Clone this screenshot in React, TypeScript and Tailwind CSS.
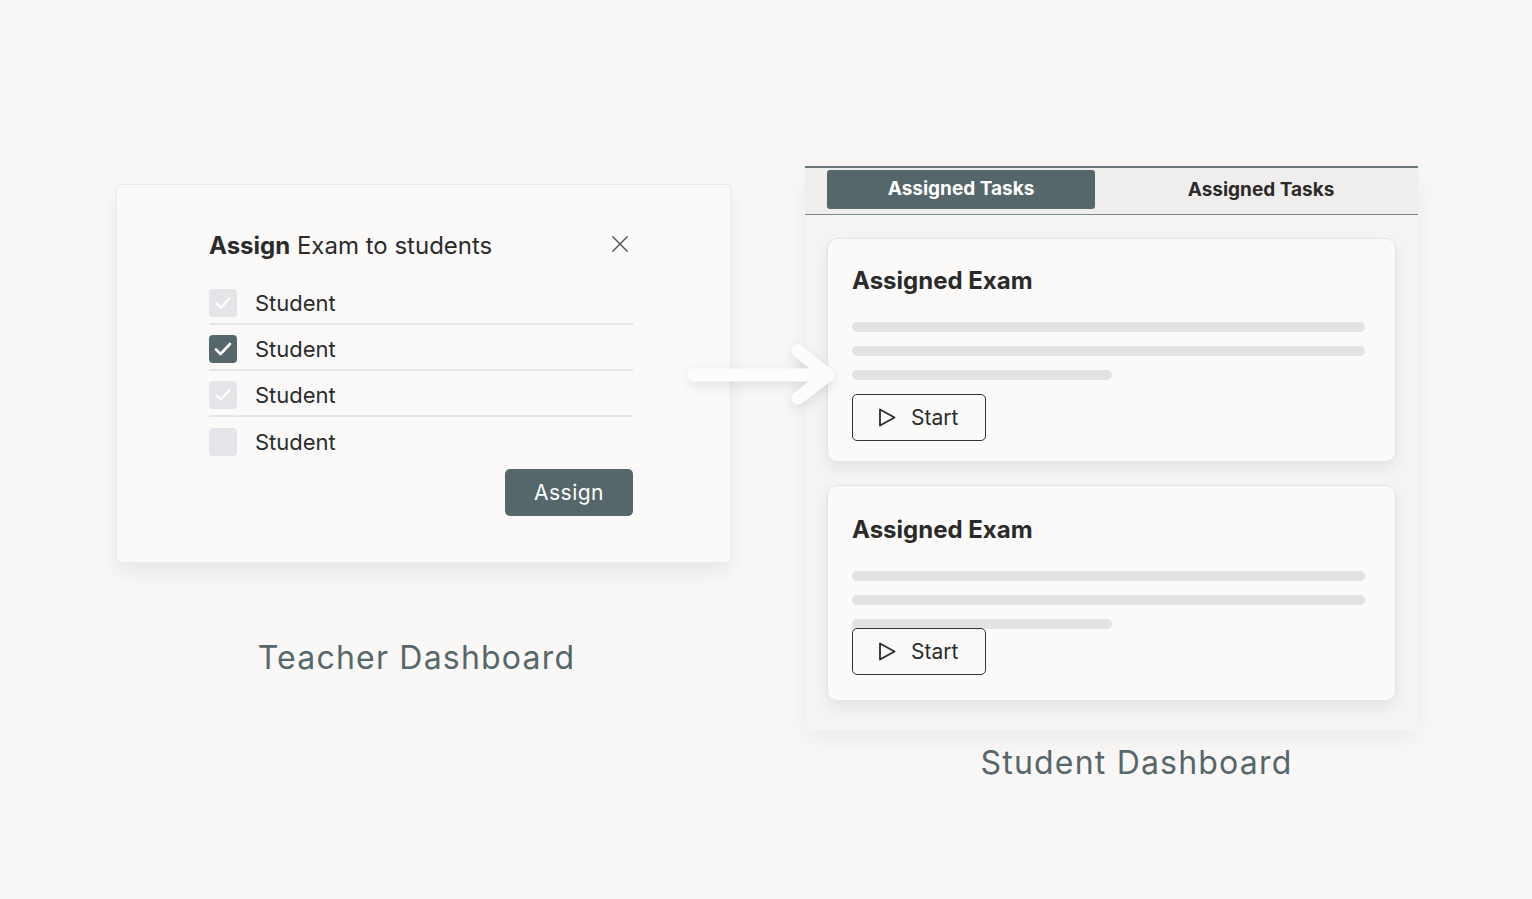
import React from 'react';

const font = { fontFamily: 'Inter, "Noto Sans", sans-serif' };

function CheckIcon({ className }: { className?: string }) {
  return (
    <svg viewBox="0 0 24 24" className={className} fill="none" stroke="currentColor" strokeWidth={2.6} strokeLinecap="round" strokeLinejoin="round">
      <path d="M5 12.5l4.5 4.5L19 7" />
    </svg>
  );
}

function StudentRow({ state, last }: { state: 'faded' | 'checked' | 'empty'; last?: boolean }) {
  return (
    <div className={`flex h-[46px] items-center gap-[18px] pt-[4px] ${last ? '' : 'border-b-2 border-[#e6e5e8]'}`}>
      <div
        className={`flex h-[28px] w-[28px] items-center justify-center rounded-[4px] ${
          state === 'checked' ? 'bg-[#56676b] text-white' : 'bg-[#e5e4e8] text-white'
        }`}
      >
        {state !== 'empty' && <CheckIcon className={state === 'checked' ? 'h-[24px] w-[24px]' : 'h-[22px] w-[22px]'} />}
      </div>
      <span className="text-[22px] text-[#2b2b2b]">Student</span>
    </div>
  );
}

function ExamCard({ titleTop, buttonGap, bottom }: { titleTop: string; buttonGap: string; bottom: string }) {
  return (
    <div className={`rounded-[10px] border border-[#e4e3e3] bg-[#fbfaf9] pl-[24px] pr-[30px] shadow-[0_6px_14px_rgba(0,0,0,0.07)] ${titleTop} ${bottom}`}>
      <h3 className="text-[24px] font-bold leading-[32px] text-[#2a2a2a]">Assigned Exam</h3>
      <div className="mt-[25px] flex flex-col gap-[14px]">
        <div className="h-[10px] w-full rounded-full bg-[#e3e2e5]" />
        <div className="h-[10px] w-full rounded-full bg-[#e3e2e5]" />
        <div className="h-[10px] w-[260px] rounded-full bg-[#e3e2e5]" />
      </div>
      <button className={`relative flex h-[47px] w-[134px] items-center gap-[14px] rounded-[5px] border-[1.5px] border-[#333] bg-[#fbfaf9] pl-[24px] ${buttonGap}`}>
        <svg viewBox="0 0 20 20" className="h-[21px] w-[20px]" fill="none" stroke="#2b2b2b" strokeWidth={1.8} strokeLinejoin="round">
          <path d="M3 2 L17.5 10 L3 18 Z" />
        </svg>
        <span className="text-[21px] text-[#2b2b2b]">Start</span>
      </button>
    </div>
  );
}

export default function App() {
  return (
    <div className="relative h-[899px] w-full overflow-hidden bg-[#faf8f6]" style={font}>
      <div className="flex items-start gap-[74px] pl-[116px] pt-[166px]">
        {/* Teacher side */}
        <div className="mt-[18px] flex w-[615px] flex-col items-center">
          <div className="h-[379px] w-[615px] rounded-[4px] border border-[#ebe9e7] bg-[#fbfaf9] pl-[92px] pr-[97px] pt-[45px] shadow-[0_10px_22px_rgba(0,0,0,0.07)]">
            <div className="flex items-center justify-between">
              <h2 className="text-[24px] leading-[32px] text-[#2b2b2b]">
                <span className="font-bold">Assign</span> Exam to students
              </h2>
              <svg viewBox="0 0 20 20" className="mr-[4px] mt-[-4px] h-[18px] w-[18px]" fill="none" stroke="#555" strokeWidth={1.6} strokeLinecap="round">
                <path d="M2 2L18 18M18 2L2 18" />
              </svg>
            </div>
            <div className="mt-[17px] flex flex-col">
              <StudentRow state="faded" />
              <StudentRow state="checked" />
              <StudentRow state="faded" />
              <StudentRow state="empty" last />
            </div>
            <div className="mt-[6px] flex justify-end">
              <button className="h-[47px] w-[128px] rounded-[5px] bg-[#56676b] text-[21px] tracking-[0.5px] text-white">Assign</button>
            </div>
          </div>
          <div className="mt-[71px] pr-[14px] text-[32px] tracking-[1.2px] text-[#56676b]">Teacher Dashboard</div>
        </div>

        {/* Student side */}
        <div className="flex w-[613px] flex-col items-center">
          <div className="h-[565px] w-[613px] border-t-2 border-[#6c777a] bg-[#f6f4f2] shadow-[0_8px_24px_rgba(0,0,0,0.06)]">
            <div className="flex h-[47px] items-start gap-[32px] border-b-[1.5px] border-[#7c878a] bg-[#f0eeec] px-[22px] pt-[2px]">
              <div className="flex h-[39px] w-[268px] items-center justify-center rounded-[3px] bg-[#56676b] text-[19px] font-bold text-white">
                Assigned Tasks
              </div>
              <div className="flex h-[41px] w-[268px] items-center justify-center text-[19px] font-bold text-[#2b2b2b]">
                Assigned Tasks
              </div>
            </div>
            <div className="flex flex-col gap-[23px] px-[22px] pt-[23px]">
              <ExamCard titleTop="pt-[26px]" buttonGap="mt-[14px]" bottom="pb-[20px]" />
              <ExamCard titleTop="pt-[28px]" buttonGap="mt-[-1px]" bottom="pb-[25px]" />
            </div>
          </div>
          <div className="mt-[8px] pl-[50px] text-[32px] tracking-[1.2px] text-[#56676b]">Student Dashboard</div>
        </div>
      </div>

      {/* arrow between dashboards */}
      <svg
        className="pointer-events-none absolute left-[680px] top-[334px] h-[80px] w-[170px] drop-shadow-[0_4px_6px_rgba(0,0,0,0.10)]"
        viewBox="0 0 170 80"
        fill="none"
        stroke="#fdfcfb"
        strokeWidth={13}
        strokeLinecap="round"
        strokeLinejoin="round"
      >
        <path d="M14 41 H146" />
        <path d="M118 17 L148 41 L118 64" />
      </svg>
    </div>
  );
}
